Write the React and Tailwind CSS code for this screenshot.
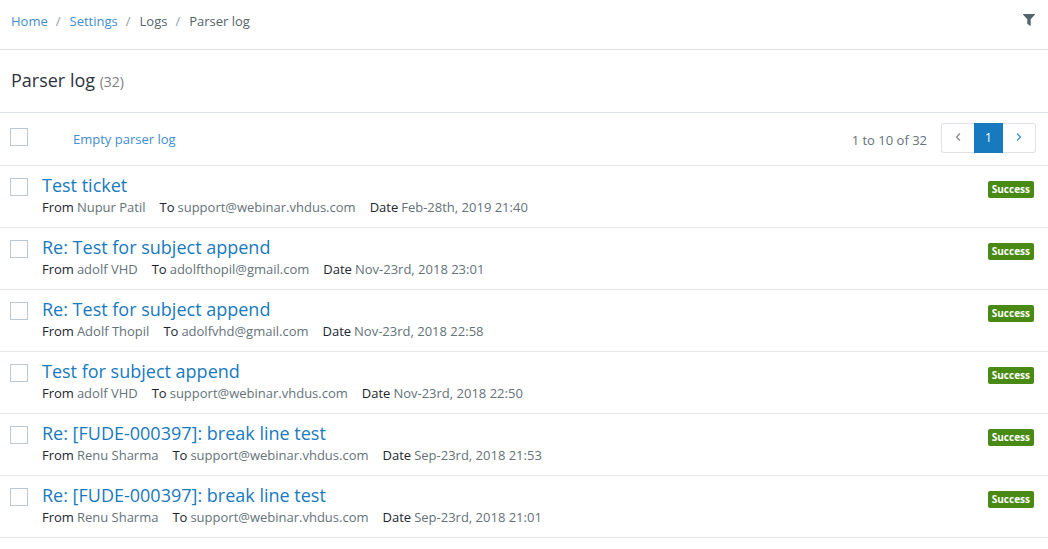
import React from "react";

const rows = [
  { subject: "Test ticket", from: "Nupur Patil", to: "support@webinar.vhdus.com", date: "Feb-28th, 2019 21:40" },
  { subject: "Re: Test for subject append", from: "adolf VHD", to: "adolfthopil@gmail.com", date: "Nov-23rd, 2018 23:01" },
  { subject: "Re: Test for subject append", from: "Adolf Thopil", to: "adolfvhd@gmail.com", date: "Nov-23rd, 2018 22:58" },
  { subject: "Test for subject append", from: "adolf VHD", to: "support@webinar.vhdus.com", date: "Nov-23rd, 2018 22:50" },
  { subject: "Re: [FUDE-000397]: break line test", from: "Renu Sharma", to: "support@webinar.vhdus.com", date: "Sep-23rd, 2018 21:53" },
  { subject: "Re: [FUDE-000397]: break line test", from: "Renu Sharma", to: "support@webinar.vhdus.com", date: "Sep-23rd, 2018 21:01" },
];

function Checkbox({ label }) {
  return (
    <input
      type="checkbox"
      aria-label={label}
      className="size-[18px] shrink-0 appearance-none border border-[#b9c8d4] bg-white checked:bg-[#187abe]"
    />
  );
}

function Separator() {
  return <li aria-hidden="true" className="pr-px text-[#929da3]">/</li>;
}

function Breadcrumb() {
  return (
    <nav aria-label="Breadcrumb">
      <ol className="flex gap-2 text-[#55636b]">
        <li><a href="#home" className="text-[#3f8dd3]">Home</a></li>
        <Separator />
        <li><a href="#settings" className="text-[#3f8dd3]">Settings</a></li>
        <Separator />
        <li>Logs</li>
        <Separator />
        <li aria-current="page">Parser log</li>
      </ol>
    </nav>
  );
}

function Chevron({ d }) {
  return (
    <svg width="6" height="8" viewBox="0 0 6 8" fill="none" stroke="currentColor" strokeWidth="1.3" aria-hidden="true">
      <path d={d} />
    </svg>
  );
}

function Pagination() {
  return (
    <nav aria-label="Pages" className="flex h-[30px]">
      <button type="button" aria-label="Previous page" className="flex w-[33px] items-center justify-center rounded-l-[3px] border border-r-0 border-[#dfe3e8] pb-[3px] text-[#8a8a8a]">
        <Chevron d="M5 .5 1.5 4 5 7.5" />
      </button>
      <button type="button" aria-current="page" className="w-[29px] bg-[#187abe] text-[12px] text-white">1</button>
      <button type="button" aria-label="Next page" className="flex w-[33px] items-center justify-center rounded-r-[3px] border border-l-0 border-[#dfe3e8] pb-[3px] text-[#3f8dd3]">
        <Chevron d="M1 .5 4.5 4 1 7.5" />
      </button>
    </nav>
  );
}

function Field({ name, value }) {
  return (
    <div className="flex gap-[3px]">
      <dt className="text-[#21252f]">{name}</dt>
      <dd className="text-[#64727a]">{value}</dd>
    </div>
  );
}

function LogRow({ row }) {
  return (
    <li className="flex items-start border-b border-[#e6e7e9] pt-[7px] pr-[14px] pb-[10px] pl-[10px]">
      <div className="flex pt-[5px]">
        <Checkbox label={"Select " + row.subject} />
      </div>
      <div className="min-w-0 flex-1 pl-[14px]">
        <h2 className="text-[18px] leading-6">
          <a href="#entry" className="text-[#187abe]">{row.subject}</a>
        </h2>
        <dl className="flex flex-wrap gap-x-[14px] leading-5">
          <Field name="From" value={row.from} />
          <Field name="To" value={row.to} />
          <Field name="Date" value={row.date} />
        </dl>
      </div>
      <span className="mt-2 rounded-[2px] bg-[#488a14] px-1 text-[10px] leading-[17px] font-bold text-white">
        Success
      </span>
    </li>
  );
}

export default function App() {
  return (
    <main className="bg-white font-['Open_Sans',sans-serif] text-[13px] leading-5">
      <header className="flex items-start justify-between border-b border-[#dfe1e5] pt-[11px] pr-[13px] pb-[18px] pl-[11px]">
        <Breadcrumb />
        <button type="button" aria-label="Filter" className="pt-[3px] text-[#55636b]">
          <svg width="12" height="12" viewBox="0 0 12 12" fill="currentColor" aria-hidden="true">
            <path d="M.4 0h11.2c.4 0 .5.5.2.8L7.7 5.3v6.2c0 .4-.4.6-.7.3L4.6 10c-.2-.1-.3-.3-.3-.5V5.3L.2.8C-.1.5 0 0 .4 0Z" />
          </svg>
        </button>
      </header>
      <div className="border-b border-[#dde3e9] pt-[18px] pb-5 pl-[11px]">
        <h1 className="text-[18px] leading-6 text-[#2d323e]">
          Parser log <span className="text-[14px] leading-5 text-[#808080]">(32)</span>
        </h1>
      </div>
      <div className="flex items-start justify-between border-b border-[#e6e7e9] pt-[10px] pr-3 pb-3 pl-[10px]">
        <div className="flex items-start pt-[5px]">
          <Checkbox label="Select all entries" />
          <button type="button" className="ml-[45px] pt-px text-[#3f8dd3]">Empty parser log</button>
        </div>
        <div className="flex items-start gap-[14px]">
          <span className="pt-[7px] text-[#64727a]">1 to 10 of 32</span>
          <Pagination />
        </div>
      </div>
      <ul>
        {rows.map((row) => (
          <LogRow key={row.date} row={row} />
        ))}
      </ul>
    </main>
  );
}
